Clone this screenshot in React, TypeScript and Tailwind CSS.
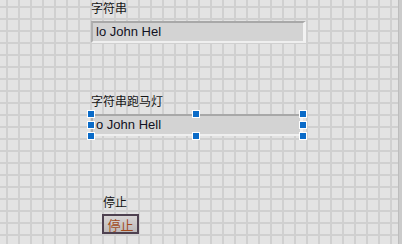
import React from "react";

const cjk = "font-['Noto_Sans_CJK_SC','Noto_Sans',sans-serif]";
const latin = "font-['Liberation_Sans','Noto_Sans_CJK_SC',sans-serif]";

const Handle = ({ pos }: { pos: string }) => (
  <div
    className={`absolute ${pos} w-[8px] h-[8px] border border-white bg-[#0a6bc8]`}
  />
);

const StringBox = ({ text, width }: { text: string; width: string }) => (
  <div
    className={`${width} h-[22px] flex items-center overflow-hidden whitespace-nowrap bg-[#d3d3d3] border-t-2 border-l-2 border-r-[3px] border-b-2 border-t-[#a8a8a8] border-l-[#b0b0b0] border-r-[#f2f2f2] border-b-[#efefef] pl-[3px] text-[13px] text-[#111122] ${latin}`}
  >
    {text}
  </div>
);

export default function App() {
  return (
    <div className="w-[402px] h-[244px] flex overflow-hidden">
      <div className="flex-1 h-full bg-[#e3e3e3] bg-[linear-gradient(to_right,#d0d0d0_2px,transparent_2px),linear-gradient(to_bottom,#d0d0d0_2px,transparent_2px)] bg-[size:12px_12px] bg-[position:6px_6px]">
        <div className="flex flex-col items-start pl-[91px]">
          <div className={`h-[21px] leading-[16px] text-[12px] text-[#151515] ${cjk}`}>
            字符串
          </div>
          <StringBox text="lo John Hel" width="w-[215px]" />

          <div
            className={`mt-[50px] h-[21px] leading-[16px] text-[12px] text-[#151515] ${cjk}`}
          >
            字符串跑马灯
          </div>
          <div className="relative">
            <StringBox text="o John Hell" width="w-[212px]" />
            <Handle pos="-left-[4px] -top-[4px]" />
            <Handle pos="left-[101px] -top-[4px]" />
            <Handle pos="left-[208px] -top-[4px]" />
            <Handle pos="-left-[4px] top-[7px]" />
            <Handle pos="left-[208px] top-[7px]" />
            <Handle pos="-left-[4px] top-[18px]" />
            <Handle pos="left-[101px] top-[18px]" />
            <Handle pos="left-[208px] top-[18px]" />
          </div>

          <div
            className={`mt-[58px] ml-[12px] h-[20px] leading-[16px] text-[12px] text-[#151515] ${cjk}`}
          >
            停止
          </div>
          <button
            className={`ml-[11px] w-[37px] h-[20px] flex items-center justify-center border-2 border-[#4e4150] bg-[linear-gradient(#d8d5d5,#bdb9b9)] text-[13px] leading-none text-[#a24a1c] ${cjk}`}
          >
            停止
          </button>
        </div>
      </div>
      <div className="w-[4px] h-full bg-[#cbcbcb] border-l border-[#bdbdbd]" />
    </div>
  );
}
